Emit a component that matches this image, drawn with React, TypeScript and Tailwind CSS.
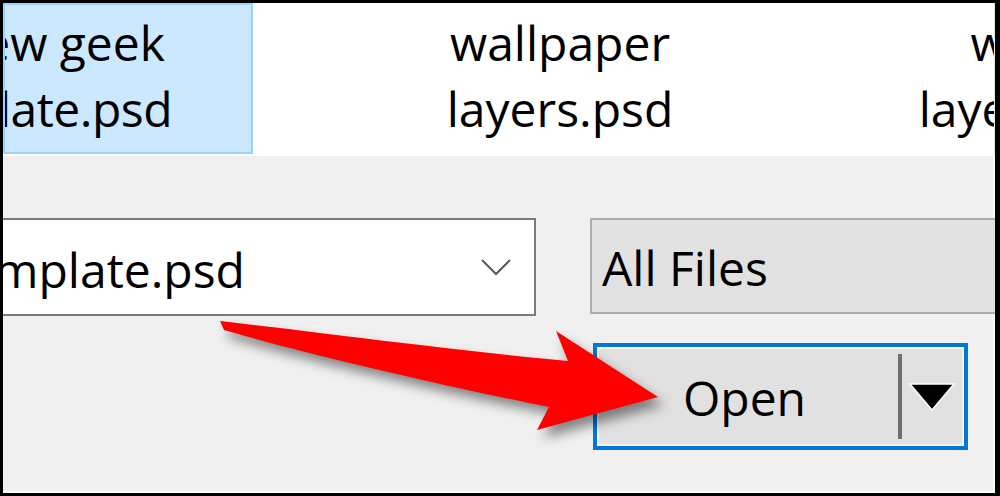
import React from "react";

const font = { fontFamily: '"Open Sans", "Noto Sans", sans-serif' };

function FileItem({ lines }: { lines: string[] }) {
  return (
    <div className="w-[472px] shrink-0 pt-[7px] text-center text-[48px] leading-[66px] text-black">
      {lines.map((l, i) => (
        <div key={i} className="whitespace-nowrap">
          {l}
        </div>
      ))}
    </div>
  );
}

export default function App() {
  return (
    <div
      className="relative flex h-[496px] w-[1000px] flex-col overflow-hidden border-b-[3px] border-l-[3px] border-r-[5px] border-t-[3px] border-black bg-[#f0f0f0]"
      style={font}
    >
      {/* File list (icon view, scrolled) */}
      <div className="flex h-[153px] shrink-0 overflow-hidden border-r border-[#e5e5e5] bg-white">
        <div className="h-[151px] w-[250px] shrink-0 overflow-hidden border-2 border-[#99d1ff] bg-[#cce8ff] pt-[5px] text-[48px] leading-[66px] text-black">
          <div className="flex justify-end whitespace-nowrap pr-[86px]">new geek</div>
          <div className="flex justify-end whitespace-nowrap pr-[79px] tracking-[-0.5px]">template.psd</div>
        </div>
        <div className="ml-[71px] flex">
          <FileItem lines={["wallpaper", "layers.psd"]} />
          <FileItem lines={["white", "layers.psd"]} />
        </div>
      </div>

      {/* Bottom controls */}
      <div className="flex flex-1 flex-col border-b-2 border-r-2 border-white pt-[62px]">
        <div className="flex items-stretch">
          <div className="ml-[-12px] flex h-[98px] w-[545px] shrink-0 items-center overflow-hidden border-2 border-[#7a7a7a] bg-white">
            <span className="ml-[-43px] mt-[6px] whitespace-nowrap text-[48px] text-black">template.psd</span>
            <svg className="ml-auto mr-[22px] shrink-0" width="32" height="20" viewBox="0 0 32 20">
              <polyline points="2,3 16,17 30,3" fill="none" stroke="#5a5a5a" strokeWidth="2" />
            </svg>
          </div>
          <div className="ml-[54px] mr-[-40px] flex h-[96px] flex-1 items-center border-2 border-[#adadad] bg-[#e1e1e1] pl-[10px]">
            <span className="mt-[4px] whitespace-nowrap text-[48px] text-black">All Files</span>
          </div>
        </div>

        <div className="ml-[590px] mt-[27px] flex h-[107px] w-[375px] border-[4px] border-[#0078d7] bg-[#e1e1e1]">
          <div className="flex flex-1 border-2 border-[#fbf1e6]">
            <div className="flex flex-1 items-center justify-center pr-[8px] pt-[2px] text-[48px] text-black">Open</div>
            <div className="my-[5px] w-[4px] bg-[#6f6f6f]" />
            <div className="flex w-[60px] items-center justify-center">
              <svg width="46" height="28" viewBox="0 0 46 28">
                <polygon points="1,1 45,1 23,27" fill="#000" stroke="#fff" strokeWidth="1.5" />
              </svg>
            </div>
          </div>
        </div>
      </div>

      {/* Red annotation arrow */}
      <svg
        className="pointer-events-none absolute left-[-3px] top-[-3px]"
        width="1000"
        height="496"
        viewBox="0 0 1000 496"
        style={{ filter: "drop-shadow(6px 8px 6px rgba(0,0,0,0.45))" }}
      >
        <path
          d="M220,321 C300,330 450,350 568,361 L556,331 L658,397 L537,430 L549,407 C440,385 310,355 224,330 Z"
          fill="#ff0000"
        />
      </svg>
    </div>
  );
}
